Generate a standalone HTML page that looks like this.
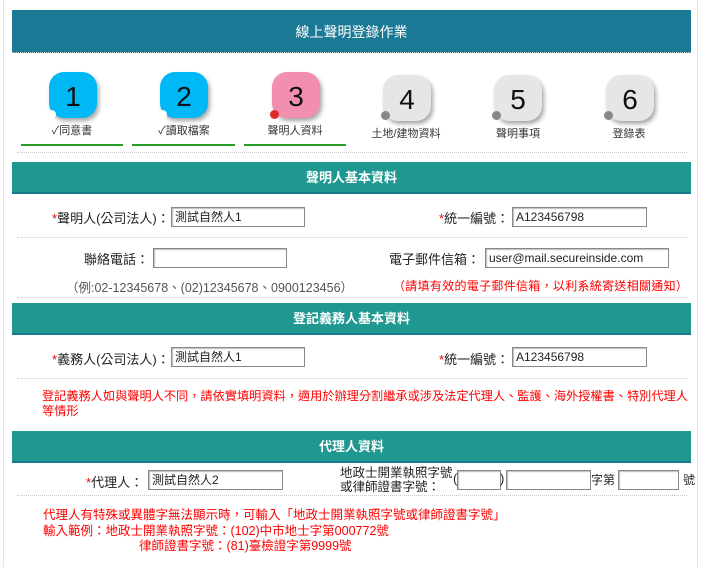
<!DOCTYPE html>
<html><head><meta charset="utf-8"><style>
body{margin:0;width:701px;height:567px;background:#fff;font-family:"Liberation Sans","Noto Sans CJK TC",sans-serif;position:relative;overflow:hidden;font-size:13px;color:#222}
.a{position:absolute}
.vl{position:absolute;top:0;bottom:0;width:1px;background:#e4e4e4}
.bar{position:absolute;left:12px;width:679px;color:#fff;text-align:center;font-weight:bold;font-size:13px;border-bottom:2px solid #167a8a}
.dot{position:absolute;left:17px;width:670px;border-top:1px dotted #c8c8c8}
.box{position:absolute;width:48px;height:46px;border-radius:15px;box-shadow:2px 3px 4px rgba(0,0,0,.35);font-size:28px;text-align:center;line-height:50px;color:#111}
.c{position:absolute;width:9px;height:9px;border-radius:50%}
.lb{position:absolute;width:110px;text-align:center;font-size:11px;color:#333}
.g{position:absolute;top:144px;height:2px;background:#2a9a2a}
.in{position:absolute;height:18px;border:1px solid #888;box-shadow:inset 1px 1px 1px #bbb;font-size:12px;line-height:18px;padding-left:3px;box-sizing:content-box}
.r{color:#e00}
.red{color:#f00;position:absolute;font-size:12.5px}
</style></head><body>
<div class="vl" style="left:3px"></div><div class="vl" style="left:697px"></div>
<div class="bar" style="top:10px;height:42px;line-height:44px;background:#1a7a96;font-weight:normal;font-size:14px;border-bottom:1px dotted #ccc">線上聲明登錄作業</div>

<div class="box" style="left:49px;top:72px;background:#00b8f5">1</div><div class="c" style="left:47px;top:110px;background:#fff"></div>
<div class="box" style="left:160px;top:72px;background:#00b8f5">2</div><div class="c" style="left:158px;top:110px;background:#fff"></div>
<div class="box" style="left:272px;top:72px;background:#f28fb0">3</div><div class="c" style="left:270px;top:110px;background:#e02828"></div>
<div class="box" style="left:383px;top:75px;background:#e6e6e6">4</div><div class="c" style="left:381px;top:111px;background:#888"></div>
<div class="box" style="left:494px;top:75px;background:#e6e6e6">5</div><div class="c" style="left:492px;top:111px;background:#888"></div>
<div class="box" style="left:606px;top:75px;background:#e6e6e6">6</div><div class="c" style="left:604px;top:111px;background:#888"></div>
<div class="lb" style="left:17px;top:122px">✓同意書</div>
<div class="lb" style="left:129px;top:122px">✓讀取檔案</div>
<div class="lb" style="left:240px;top:122px">聲明人資料</div>
<div class="lb" style="left:351px;top:125px">土地/建物資料</div>
<div class="lb" style="left:463px;top:125px">聲明事項</div>
<div class="lb" style="left:574px;top:125px">登錄表</div>
<div class="g" style="left:21px;width:102px"></div><div class="g" style="left:132px;width:103px"></div><div class="g" style="left:244px;width:102px"></div>
<div class="dot" style="top:152px"></div>

<div class="bar" style="top:162px;height:30px;line-height:31px;background:#1e9890">聲明人基本資料</div>
<div class="a" style="left:52px;top:208px"><span class="r">*</span>聲明人(公司法人)：</div>
<div class="in" style="left:171px;top:207px;width:129px">測試自然人1</div>
<div class="a" style="left:439px;top:208px"><span class="r">*</span>統一編號：</div>
<div class="in" style="left:512px;top:207px;width:130px">A123456798</div>
<div class="dot" style="top:237px"></div>
<div class="a" style="left:84px;top:249px">聯絡電話：</div>
<div class="in" style="left:153px;top:248px;width:129px"></div>
<div class="a" style="left:389px;top:249px">電子郵件信箱：</div>
<div class="in" style="left:485px;top:248px;width:179px">user@mail.secureinside.com</div>
<div class="a" style="left:66px;top:277px;color:#555;font-size:12.5px">（例:02-12345678、(02)12345678、0900123456）</div>
<div class="red" style="left:393px;top:277px;font-size:12px;letter-spacing:0.3px">（請填有效的電子郵件信箱，以利系統寄送相關通知）</div>
<div class="dot" style="top:297px"></div>

<div class="bar" style="top:303px;height:30px;line-height:31px;background:#1e9890">登記義務人基本資料</div>
<div class="a" style="left:52px;top:349px"><span class="r">*</span>義務人(公司法人)：</div>
<div class="in" style="left:171px;top:347px;width:129px">測試自然人1</div>
<div class="a" style="left:439px;top:349px"><span class="r">*</span>統一編號：</div>
<div class="in" style="left:512px;top:347px;width:130px">A123456798</div>
<div class="dot" style="top:378px"></div>
<div class="red" style="left:42px;top:389px;width:652px;line-height:15px;font-size:12.2px">登記義務人如與聲明人不同，請依實填明資料，適用於辦理分割繼承或涉及法定代理人、監護、海外授權書、特別代理人等情形</div>

<div class="bar" style="top:431px;height:30px;line-height:31px;background:#1e9890">代理人資料</div>
<div class="a" style="left:86px;top:472px"><span class="r">*</span>代理人：</div>
<div class="in" style="left:148px;top:470px;width:130px">測試自然人2</div>
<div class="a" style="left:340px;top:466px;font-size:12.5px;line-height:14px">地政士開業執照字號<br>或律師證書字號：</div>
<div class="a" style="left:453px;top:471px">(</div>
<div class="in" style="left:457px;top:470px;width:39px"></div>
<div class="a" style="left:500px;top:471px">)</div>
<div class="in" style="left:506px;top:470px;width:80px"></div>
<div class="a" style="left:591px;top:471px;font-size:12px">字第</div>
<div class="in" style="left:618px;top:470px;width:56px"></div>
<div class="a" style="left:683px;top:471px;font-size:12px">號</div>
<div class="dot" style="top:495px"></div>
<div class="red" style="left:43px;top:508px;line-height:15.5px">代理人有特殊或異體字無法顯示時，可輸入「地政士開業執照字號或律師證書字號」<br>輸入範例：地政士開業執照字號：(102)中市地士字第000772號<br><span style="padding-left:96px">律師證書字號：(81)臺檢證字第9999號</span></div>
</body></html>
